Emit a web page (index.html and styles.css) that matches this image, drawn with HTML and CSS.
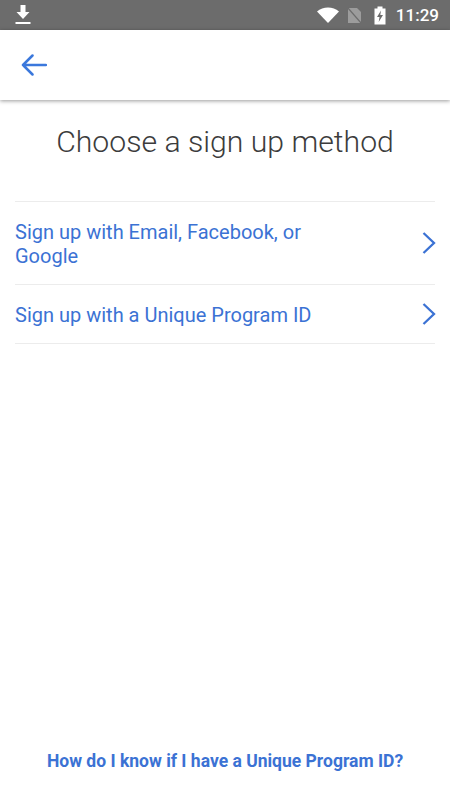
FILE: index.html
```html
<!DOCTYPE html>
<html lang="en">
<head>
    <meta charset="UTF-8">
    <meta name="viewport" content="width=device-width, initial-scale=1.0">
    <title>Choose a sign up method</title>
    <link rel="stylesheet" href="styles.css">
</head>
<body>
    <div class="status-bar">
        <svg class="download-icon" width="16" height="20" viewBox="0 0 16 20">
            <path d="M5.5 0h5v7h4L8 14 1.500 7h4z" fill="#fff"/>
            <rect x="0.500" y="17" width="15" height="2" fill="#fff"/>
        </svg>
        <div class="status-right">
            <svg class="wifi-icon" width="22" height="16" viewBox="0 0 22 16">
                <path d="M0 4.500C3 2 7 0.500 11 0.500S19 2 22 4.500L11 16z" fill="#fff"/>
            </svg>
            <svg class="sim-icon" width="15" height="17" viewBox="0 0 15 17">
                <path d="M1 1h9l4 4v11H1z" fill="#9c9c9c"/>
                <path d="M0.500 0.500l14 16" stroke="#6c6c6c" stroke-width="1.200"/>
            </svg>
            <svg class="battery-icon" width="12" height="19" viewBox="0 0 12 19">
                <path d="M3.500 0.500h5v2H11.500v16H0.500V2.500H3.500z" fill="#fff"/>
                <path d="M7 4.500L3 11h2.500L4.700 16 9 9H6.300z" fill="#6c6c6c"/>
            </svg>
            <span class="clock">11:29</span>
        </div>
    </div>

    <header class="top-bar">
        <svg class="back-icon" width="26" height="22" viewBox="0 0 26 22">
            <path d="M25 11H2M11.500 1.500L2 11l9.500 9.500" fill="none" stroke="#3b78dc" stroke-width="2.500" stroke-linecap="round" stroke-linejoin="round"/>
        </svg>
    </header>

    <main class="content">
        <h1 class="title">Choose a sign up method</h1>
        <ul class="method-list">
            <li class="method">
                <span class="method-label">Sign up with Email, Facebook, or Google</span>
                <svg class="chevron" width="14" height="22" viewBox="0 0 14 22">
                    <path d="M1.500 1l10.500 10-10.500 10" fill="none" stroke="#3b72d4" stroke-width="2.300"/>
                </svg>
            </li>
            <li class="method">
                <span class="method-label">Sign up with a Unique Program ID</span>
                <svg class="chevron" width="14" height="22" viewBox="0 0 14 22">
                    <path d="M1.500 1l10.500 10-10.500 10" fill="none" stroke="#3b72d4" stroke-width="2.300"/>
                </svg>
            </li>
        </ul>
    </main>

    <footer class="help">How do I know if I have a Unique Program ID?</footer>
</body>
</html>
```
FILE: styles.css
```css
html, body {
    height: 100%;
}
body {
    font-family: Roboto, "Liberation Sans", sans-serif;
    background-color: #ffffff;
    margin: 0;
    padding: 0;
    display: flex;
    flex-direction: column;
    overflow: hidden;
}
.status-bar {
    height: 30px;
    flex-shrink: 0;
    background-color: #6c6c6c;
    display: flex;
    justify-content: space-between;
    align-items: center;
    padding: 0 11px 0 15px;
    box-sizing: border-box;
}
.download-icon {
    margin-top: -1px;
}
.status-right {
    display: flex;
    align-items: center;
}
.wifi-icon {
    margin-right: 8px;
}
.sim-icon {
    margin-right: 12px;
}
.battery-icon {
    margin-right: 10px;
}
.clock {
    color: #ffffff;
    font-size: 17px;
    font-weight: 500;
}
.top-bar {
    height: 70px;
    flex-shrink: 0;
    display: flex;
    align-items: center;
    padding-left: 21px;
    box-sizing: border-box;
    background-color: #ffffff;
    box-shadow: 0 1px 4px rgba(0, 0, 0, 0.4);
}
.content {
    flex-grow: 1;
    padding: 0 15px;
}
.title {
    margin: 25px 0 42px;
    font-size: 30.200px;
    line-height: 34px;
    font-weight: 300;
    color: #3c3c3c;
    text-align: center;
}
.method-list {
    list-style: none;
    margin: 0;
    padding: 0;
    border-top: 1px solid #ececec;
}
.method {
    display: flex;
    justify-content: space-between;
    align-items: center;
    border-bottom: 1px solid #ececec;
    padding: 18px 0 16px;
}
.method-label {
    width: 320px;
    font-size: 20px;
    line-height: 24px;
    color: #3b72d4;
}
.chevron {
    margin-right: -1px;
    margin-top: -3px;
}
.help {
    flex-shrink: 0;
    padding-bottom: 28px;
    text-align: center;
    font-size: 17.500px;
    line-height: 21px;
    font-weight: 700;
    color: #3b72d4;
}
```
